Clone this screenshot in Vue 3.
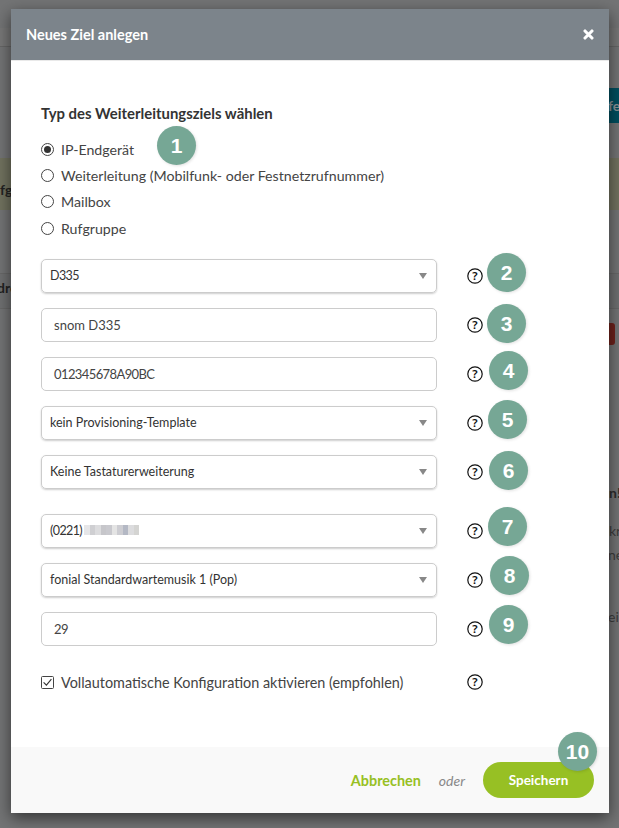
<script setup>
const radios = [
  { label: 'IP-Endgerät', on: true },
  { label: 'Weiterleitung (Mobilfunk- oder Festnetzrufnummer)', on: false },
  { label: 'Mailbox', on: false },
  { label: 'Rufgruppe', on: false }
]
const fields = [
  { kind: 'select', text: 'D335', badge: 2, dx: 0, dy: -4, cls: 'f-a', tight: true },
  { kind: 'input', text: 'snom D335', badge: 3, dx: 0, dy: -2, cls: 'f-a', tight: false },
  { kind: 'input', text: '012345678A90BC', badge: 4, dx: 2, dy: -4, cls: 'f-a', tight: true },
  { kind: 'select', text: 'kein Provisioning-Template', badge: 5, dx: 1, dy: -4, cls: 'f-a', tight: false },
  { kind: 'select', text: 'Keine Tastaturerweiterung', badge: 6, dx: 2, dy: -2, cls: 'f-b', tight: false },
  { kind: 'select', text: '(0221)', blur: true, badge: 7, dx: 1, dy: -5, cls: 'f-a', tight: true },
  { kind: 'select', text: 'fonial Standardwartemusik 1 (Pop)', badge: 8, dx: 3, dy: -5, cls: 'f-a', tight: false },
  { kind: 'input', text: '29', badge: 9, dx: 2, dy: -5, cls: 'f-a', tight: true }
]
const blurCells = ['#e6e6e8','#cfcfd2','#dcdcde','#c6c6ca','#c9c9ce','#e4e4e4','#cdcdd2','#b4b8c4','#dcdcde','#d4d4d2']
</script>

<template>
  <div class="page">
    <div class="bg-top"></div>
    <div class="bg-band"></div>
    <div class="bg-row"></div>
    <div class="bg-teal"></div>
    <div class="bg-red"></div>
    <span class="bg-text t1">fg</span>
    <span class="bg-text t2">dre</span>
    <span class="bg-text t3">fe</span>
    <span class="bg-text t4">n!</span>
    <span class="bg-text t5">kr</span>
    <span class="bg-text t6">ne</span>
    <span class="bg-text t7">ei</span>

    <div class="modal">
      <header class="head">
        <h1>Neues Ziel anlegen</h1>
        <svg class="close" viewBox="0 0 12 12" width="11" height="11"><path d="M2.2 2.2l7.6 7.6M9.8 2.2l-7.6 7.6" stroke="#fff" stroke-width="3.4" stroke-linecap="round" fill="none" /></svg>
      </header>
      <div class="body">
        <h2>Typ des Weiterleitungsziels wählen</h2>
        <div class="radios">
          <label v-for="r in radios" :key="r.label" class="radio">
            <span class="dot" :class="{ on: r.on }"></span>
            <span>{{ r.label }}</span>
            <span v-if="r.on" class="badge b1">1</span>
          </label>
        </div>
        <div class="fields">
          <div v-for="f in fields" :key="f.badge" class="row" :class="f.cls">
            <div class="ctl" :class="[f.kind, { tight: f.tight }]">
              <span>{{ f.text }}</span>
              <span v-if="f.blur" class="blur"><i v-for="(c, i) in blurCells" :key="i" :style="{ background: c }"></i></span>
              <span v-if="f.kind === 'select'" class="caret"></span>
            </div>
            <svg class="help" viewBox="0 0 16 16" width="16" height="16"><circle cx="8" cy="8" r="7.2" fill="#fff" stroke="#111" stroke-width="1.2" /><text x="8" y="12" text-anchor="middle" class="q">?</text></svg>
            <span class="badge" :style="{ transform: `translate(${f.dx}px, ${f.dy}px)` }">{{ f.badge }}</span>
          </div>
        </div>
        <div class="check-row">
          <label class="check">
            <svg viewBox="0 0 13 13" width="13" height="13"><rect x=".5" y=".5" width="12" height="12" rx="1" fill="#fff" stroke="#444" /><path d="M2.6 6.4l2.8 2.8 5-6" stroke="#333" stroke-width="1.1" fill="none" /></svg>
            <span>Vollautomatische Konfiguration aktivieren (empfohlen)</span>
          </label>
          <svg class="help" viewBox="0 0 16 16" width="16" height="16"><circle cx="8" cy="8" r="7.2" fill="#fff" stroke="#111" stroke-width="1.2" /><text x="8" y="12" text-anchor="middle" class="q">?</text></svg>
        </div>
      </div>
      <footer class="foot">
        <a class="cancel">Abbrechen</a>
        <span class="or">oder</span>
        <button class="save">Speichern<span class="badge b10">10</span></button>
      </footer>
    </div>
  </div>
</template>

<style>
html, body { margin: 0; background: #737475; }
</style>

<style scoped>
.page { position: relative; width: 619px; height: 828px; overflow: hidden; background: #737475; font-family: Lato, "Noto Sans", sans-serif; color: #333; }
.bg-top { position: absolute; left: 0; right: 0; top: 28px; height: 18px; background: #777; border-bottom: 1px solid #666; }
.bg-band { position: absolute; left: 0; right: 0; top: 158px; height: 52px; background: #71725f; }
.bg-row { position: absolute; left: 0; right: 0; top: 273px; height: 34px; background: #6f7071; border-top: 1px solid #686868; border-bottom: 1px solid #686868; }
.bg-teal { position: absolute; left: 600px; width: 30px; top: 88px; height: 35px; background: #004e5e; }
.bg-red { position: absolute; left: 600px; width: 15px; top: 323px; height: 22px; border-radius: 3px; background: #6e221c; }
.bg-text { position: absolute; font-size: 14px; font-weight: 700; color: #222; line-height: 18px; }
.t1 { left: 0; top: 181px; }
.t2 { left: -3px; top: 279px; }
.t3 { left: 608px; top: 97px; color: #8a9296; }
.t4 { left: 609px; top: 484px; color: #2c2c2c; }
.t5 { left: 609px; top: 522px; font-weight: 400; color: #3c3c3c; }
.t6 { left: 608px; top: 546px; font-weight: 400; color: #3c3c3c; }
.t7 { left: 608px; top: 608px; font-weight: 400; color: #3c3c3c; }

.modal { position: absolute; left: 11px; top: 9px; width: 598px; height: 804px; background: #fff; display: flex; flex-direction: column; box-shadow: 0 5px 15px rgba(0,0,0,.55); }
.head { height: 52px; flex: none; box-sizing: border-box; background: #7c848b; border-bottom: 1px solid #e9e9e9; display: flex; align-items: center; justify-content: space-between; padding: 0 15px; color: #fff; }
.head h1 { margin: 0; font-size: 14.5px; font-weight: 700; }
.close { margin-top: -1px; }
.body { flex: 1; padding: 43px 30px 0; min-height: 0; }
h2 { margin: 0; font-size: 14.9px; font-weight: 700; line-height: 18px; color: #333; }
.radios { margin-top: 14px; display: flex; flex-direction: column; }
.radio { position: relative; height: 26.3px; display: flex; align-items: center; gap: 7px; font-size: 14.2px; color: #444; }
.dot { width: 13px; height: 13px; box-sizing: border-box; border: 1px solid #444; border-radius: 50%; background: #fff; flex: none; display: flex; align-items: center; justify-content: center; }
.dot.on::after { content: ""; width: 7px; height: 7px; border-radius: 50%; background: #333; }
.fields { margin-top: 18px; display: flex; flex-direction: column; }
.row { height: 34px; margin-bottom: 15px; display: flex; align-items: center; position: relative; }
.row.f-b { margin-bottom: 25px; }
.ctl { width: 396px; height: 34px; box-sizing: border-box; border: 1px solid #ccc; border-radius: 5px; display: flex; align-items: center; font-size: 13px; color: #444; position: relative; flex: none; }
.select { padding-left: 8px; padding-bottom: 2px; font-size: 12.5px; color: #333; box-shadow: 0 1px 2px rgba(0,0,0,.2); }
.input { padding-left: 12px; }
.tight { letter-spacing: -.6px; }
.blur { display: inline-flex; margin-left: 2px; height: 10px; }
.blur i { width: 5.5px; height: 10px; display: block; }
.caret { position: absolute; right: 9px; top: 13px; border-left: 4px solid transparent; border-right: 4px solid transparent; border-top: 6px solid #888; }
.help { margin-left: 30px; flex: none; }
.q { font: 600 11.5px "Noto Sans", sans-serif; fill: #111; }
.badge { width: 39px; height: 39px; border-radius: 50%; background: #76a795; color: #fff; font: 700 21px/39px "Liberation Sans", sans-serif; letter-spacing: 0; text-align: center; box-shadow: 1px 1px 3px rgba(0,0,0,.12); flex: none; margin-left: 4px; }
.b1 { position: absolute; left: 116px; top: -10px; margin: 0; }
.b10 { position: absolute; right: -3px; top: -30px; margin: 0; }
.check-row { display: flex; align-items: center; height: 18px; margin-top: 12px; position: relative; }
.check { width: 396px; display: flex; align-items: center; gap: 7px; font-size: 14.4px; color: #444; }
.foot { height: 66px; flex: none; box-sizing: border-box; background: #f9f9f9; display: flex; align-items: center; justify-content: flex-end; padding: 0 15px 0 0; }
.cancel { font-size: 14.4px; font-weight: 700; color: #97c024; }
.or { margin: 0 18px; font-size: 14px; font-style: italic; color: #888; }
.save { position: relative; width: 111px; height: 36px; border: 0; border-radius: 18px; background: #97c024; color: #fff; font: 700 13.5px Lato, sans-serif; padding: 0; }
</style>
